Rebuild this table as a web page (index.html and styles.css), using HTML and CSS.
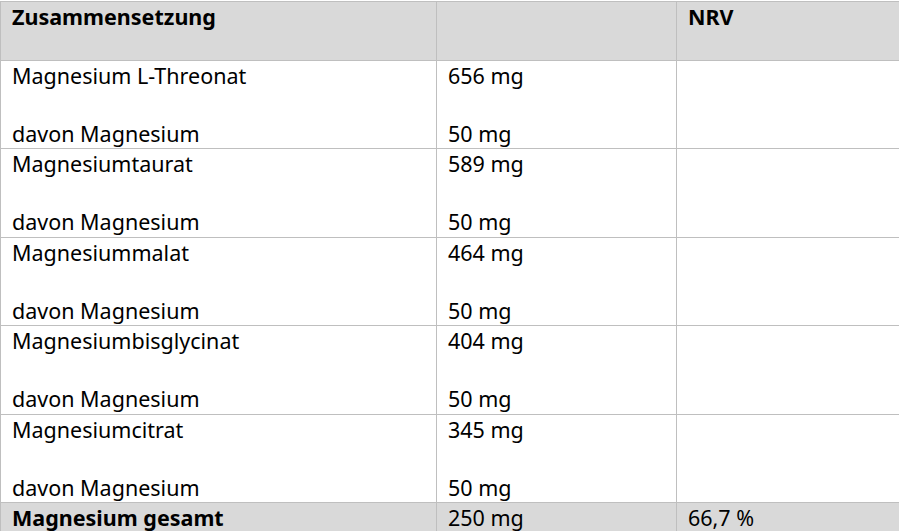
FILE: index.html
```html
<!DOCTYPE html>
<html lang="de">
<head>
<meta charset="utf-8">
<title>Zusammensetzung</title>
<link rel="stylesheet" href="styles.css">
</head>
<body>
<table class="facts">
  <colgroup>
    <col class="c-name">
    <col class="c-amount">
    <col class="c-nrv">
  </colgroup>
  <thead>
    <tr class="head">
      <th>Zusammensetzung<br>&nbsp;</th>
      <th></th>
      <th>NRV</th>
    </tr>
  </thead>
  <tbody>
    <tr class="row">
      <td>Magnesium L-Threonat<br><br>davon Magnesium</td>
      <td>656 mg<br><br>50 mg</td>
      <td></td>
    </tr>
    <tr class="row">
      <td>Magnesiumtaurat<br><br>davon Magnesium</td>
      <td>589 mg<br><br>50 mg</td>
      <td></td>
    </tr>
    <tr class="row">
      <td>Magnesiummalat<br><br>davon Magnesium</td>
      <td>464 mg<br><br>50 mg</td>
      <td></td>
    </tr>
    <tr class="row">
      <td>Magnesiumbisglycinat<br><br>davon Magnesium</td>
      <td>404 mg<br><br>50 mg</td>
      <td></td>
    </tr>
    <tr class="row">
      <td>Magnesiumcitrat<br><br>davon Magnesium</td>
      <td>345 mg<br><br>50 mg</td>
      <td></td>
    </tr>
    <tr class="total">
      <td class="strong">Magnesium gesamt</td>
      <td>250 mg</td>
      <td>66,7 %</td>
    </tr>
  </tbody>
</table>
</body>
</html>
```
FILE: styles.css
```css
html, body {
  margin: 0;
  padding: 0;
  background: #ffffff;
}
body {
  padding-top: 1px;
  font-family: "Noto Sans", "Liberation Sans", sans-serif;
  font-size: 21.5px;
  line-height: 29px;
  color: #000000;
  overflow: hidden;
}
.facts {
  border-collapse: collapse;
  table-layout: fixed;
  width: 904px;
}
.c-name { width: 436px; }
.c-amount { width: 240px; }
.c-nrv { width: 228px; }
.facts th,
.facts td {
  border: 1px solid #bfbfbf;
  padding: 0 10px 0 11px;
  text-align: left;
  vertical-align: top;
}
.facts th {
  font-weight: 700;
  background: #d9d9d9;
}
.facts .head th {
  height: 58px;
}
.facts .row td {
  height: 87.4px;
}
.facts .total td {
  background: #d9d9d9;
}
.facts .strong {
  font-weight: 700;
}
```
